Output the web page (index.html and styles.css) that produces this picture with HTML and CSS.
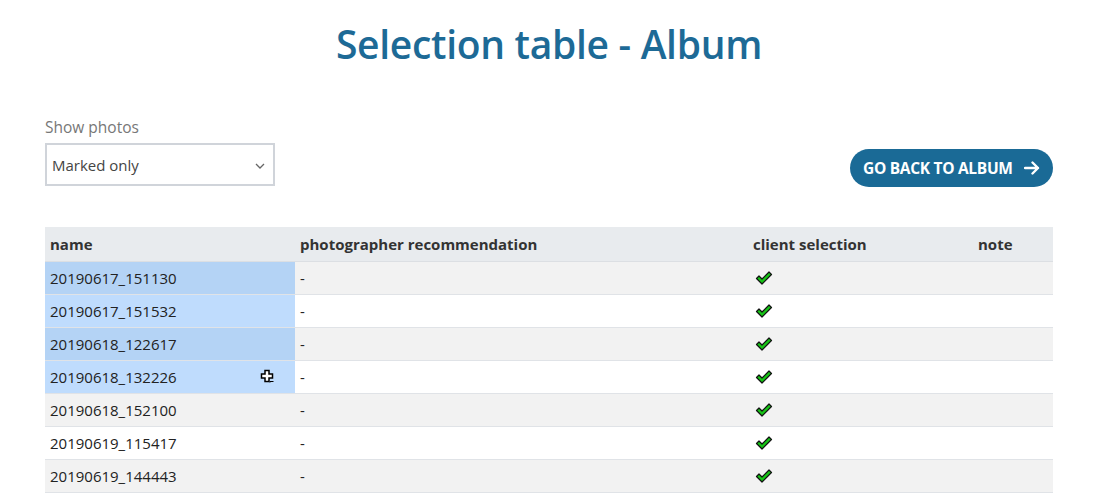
FILE: index.html
```html
<!DOCTYPE html>
<html>
<head>
<meta charset="utf-8">
<link rel="stylesheet" href="styles.css">
</head>
<body>
<div class="page">
  <h1 class="title">Selection table - Album</h1>
  <div class="controls">
    <div class="filter">
      <label class="filter-label">Show photos</label>
      <div class="select">
        <span>Marked only</span>
        <svg class="caret" width="10" height="6" viewBox="0 0 10 6"><path d="M1 1l4 4 4-4" fill="none" stroke="#666" stroke-width="1.3"/></svg>
      </div>
    </div>
    <a class="back-btn">GO BACK TO ALBUM
      <svg width="16" height="14" viewBox="0 0 16 14"><path d="M1 7h13M8.5 1.5L14 7l-5.5 5.5" fill="none" stroke="#fff" stroke-width="2.4" stroke-linecap="round" stroke-linejoin="round"/></svg>
    </a>
  </div>
  <table class="sel-table">
    <thead>
      <tr><th class="c-name">name</th><th class="c-rec">photographer recommendation</th><th class="c-client">client selection</th><th class="c-note">note</th></tr>
    </thead>
    <tbody>
      <tr class="odd"><td class="c-name hl">20190617_151130</td><td>-</td><td><svg class="check" viewBox="0 0 18 15"><path d="M1.5 8.5l2.5-2.5 3 3L14 2l2.5 2.5-9.5 9.5z" fill="#16c416" stroke="#111" stroke-width="1.2" stroke-linejoin="round"/></svg></td><td></td></tr>
      <tr><td class="c-name hl">20190617_151532</td><td>-</td><td><svg class="check" viewBox="0 0 18 15"><path d="M1.5 8.5l2.5-2.5 3 3L14 2l2.5 2.5-9.5 9.5z" fill="#16c416" stroke="#111" stroke-width="1.2" stroke-linejoin="round"/></svg></td><td></td></tr>
      <tr class="odd"><td class="c-name hl">20190618_122617</td><td>-</td><td><svg class="check" viewBox="0 0 18 15"><path d="M1.5 8.5l2.5-2.5 3 3L14 2l2.5 2.5-9.5 9.5z" fill="#16c416" stroke="#111" stroke-width="1.2" stroke-linejoin="round"/></svg></td><td></td></tr>
      <tr><td class="c-name hl cursor-cell">20190618_132226<svg class="cursor" width="15" height="15" viewBox="0 0 15 15"><path d="M5 1.5h4v3.5h3.5v4H9v3.5H5V9H1.5V5H5z" fill="#fff" stroke="#000" stroke-width="1.5"/><path d="M10 13.5v-1h3.5" fill="none" stroke="#000" stroke-width="1"/></svg></td><td>-</td><td><svg class="check" viewBox="0 0 18 15"><path d="M1.5 8.5l2.5-2.5 3 3L14 2l2.5 2.5-9.5 9.5z" fill="#16c416" stroke="#111" stroke-width="1.2" stroke-linejoin="round"/></svg></td><td></td></tr>
      <tr class="odd"><td class="c-name">20190618_152100</td><td>-</td><td><svg class="check" viewBox="0 0 18 15"><path d="M1.5 8.5l2.5-2.5 3 3L14 2l2.5 2.5-9.5 9.5z" fill="#16c416" stroke="#111" stroke-width="1.2" stroke-linejoin="round"/></svg></td><td></td></tr>
      <tr><td class="c-name">20190619_115417</td><td>-</td><td><svg class="check" viewBox="0 0 18 15"><path d="M1.5 8.5l2.5-2.5 3 3L14 2l2.5 2.5-9.5 9.5z" fill="#16c416" stroke="#111" stroke-width="1.2" stroke-linejoin="round"/></svg></td><td></td></tr>
      <tr class="odd"><td class="c-name">20190619_144443</td><td>-</td><td><svg class="check" viewBox="0 0 18 15"><path d="M1.5 8.5l2.5-2.5 3 3L14 2l2.5 2.5-9.5 9.5z" fill="#16c416" stroke="#111" stroke-width="1.2" stroke-linejoin="round"/></svg></td><td></td></tr>
    </tbody>
  </table>
</div>
</body>
</html>
```
FILE: styles.css
```css
* { box-sizing: border-box; }
html, body { margin: 0; padding: 0; background: #fff; }
body {
  font-family: "Open Sans", "Noto Sans", sans-serif;
  color: #222;
  overflow: hidden;
}
.page {
  width: 1008px;
  margin: 0 0 0 45px;
}
.title {
  margin: 0;
  padding-top: 17px;
  height: 88px;
  text-align: center;
  font-size: 39px;
  font-weight: 600;
  color: #1d6a96;
  line-height: 54px;
  letter-spacing: -0.3px;
}
.controls {
  display: flex;
  justify-content: space-between;
  align-items: flex-end;
  height: 99px;
}
.filter { display: flex; flex-direction: column; }
.filter-label {
  font-size: 15.5px;
  color: #777;
  line-height: 20px;
  margin-bottom: 6px;
}
.select {
  width: 230px;
  height: 43px;
  margin-bottom: 1px;
  border: 2px solid #d0d4da;
  display: flex;
  align-items: center;
  justify-content: space-between;
  padding: 0 8px 0 5px;
  font-size: 15px;
  color: #444;
}
.caret { margin-top: 2px; }
.back-btn {
  display: flex;
  align-items: center;
  gap: 11px;
  height: 38px;
  width: 203px;
  padding: 0 0 0 13px;
  border-radius: 19px;
  background: #1a6a96;
  color: #fff;
  font-size: 15.5px;
  font-weight: 700;
  letter-spacing: -0.3px;
}
.sel-table {
  margin-top: 40px;
  width: 1008px;
  border-collapse: collapse;
  table-layout: fixed;
  font-size: 15px;
}
.sel-table th {
  background: #e8ebee;
  text-align: left;
  font-weight: 700;
  color: #333;
  height: 34px;
  padding: 0 5px;
  border-bottom: 1px solid #dcdfe3;
}
.sel-table td {
  height: 33px;
  padding: 0 5px;
  border-bottom: 1px solid #e0e3e7;
  color: #222;
}
.sel-table tr.odd td { background: #f2f2f2; }
.c-name { width: 250px; }
.c-rec { width: 453px; }
.c-client { width: 225px; }
.c-note { width: 80px; }
.sel-table td.hl { background: #bfdcfd; }
.sel-table tr.odd td.hl { background: #b4d3f5; }
.cursor-cell { position: relative; }
.cursor { position: absolute; left: 215px; top: 8px; }
.check { width: 18px; height: 15px; display: block; margin-left: 2px; }
```
